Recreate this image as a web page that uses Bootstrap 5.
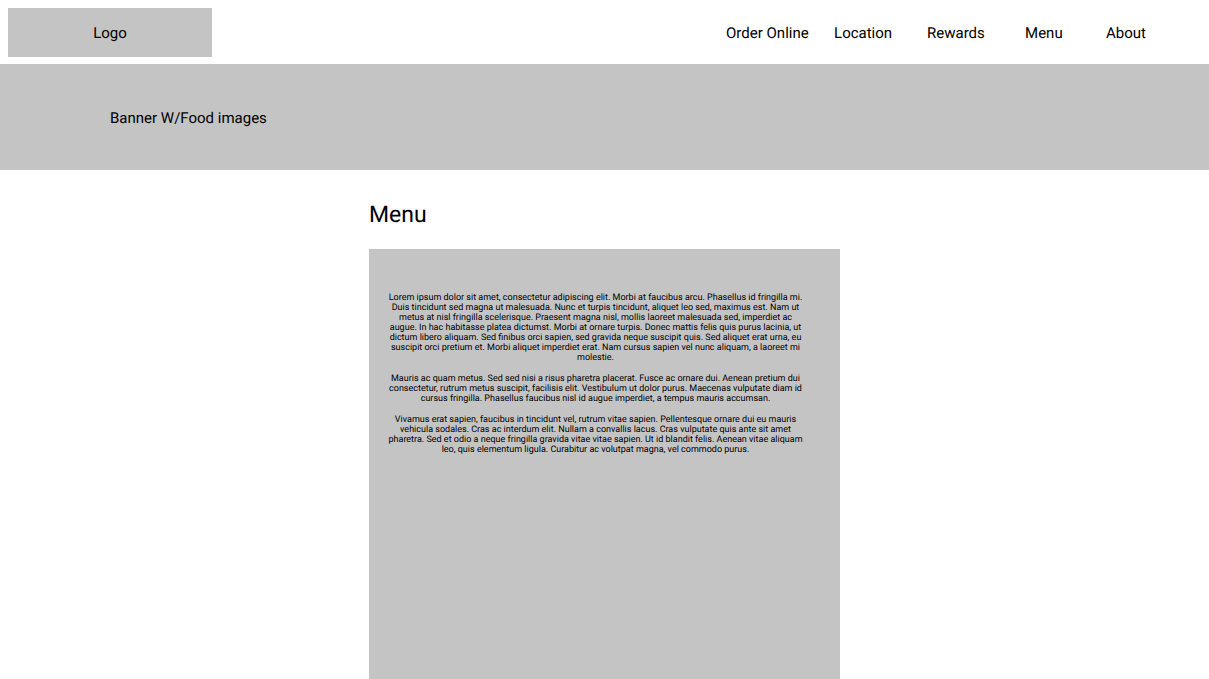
<!DOCTYPE html>
<html lang="en">
<head>
<meta charset="utf-8">
<meta name="viewport" content="width=device-width, initial-scale=1">
<title>Menu</title>
<link href="https://cdn.jsdelivr.net/npm/bootstrap@5.3.0/dist/css/bootstrap.min.css" rel="stylesheet">
<style>
  :root { --block: #c4c4c4; }
  body { font-family: Roboto, sans-serif; font-size: 15px; line-height: 18px; color: #000; text-rendering: geometricPrecision; }
  .block { background: var(--block); }
  .site-header { padding: 8px 8px 7px; }
  .site-logo { width: 204px; height: 49px; color: #000; }
  .site-nav { display: grid; grid-template-columns: 108px 93px 98px 81px auto; padding-right: 55px; }
  .site-nav .nav-link { color: #000; }
  .banner { min-height: 106px; padding: 2px 110px 0; }
  .menu-column { width: 100%; max-width: 471px; padding-top: 31px; }
  .menu-title { font-size: 23px; line-height: 27px; margin-bottom: 21px; }
  .menu-card { padding: 44px 36px 20px 18px; font-size: 9px; line-height: 10px; }
  .menu-card p { margin-bottom: 11px; }
</style>
</head>
<body class="d-flex flex-column min-vh-100 bg-white">
  <header class="site-header d-flex justify-content-between align-items-center">
    <a href="#" class="site-logo block d-flex align-items-center justify-content-center text-decoration-none">Logo</a>
    <nav class="site-nav" aria-label="Main">
      <a class="nav-link p-0" href="#">Order Online</a>
      <a class="nav-link p-0" href="#">Location</a>
      <a class="nav-link p-0" href="#">Rewards</a>
      <a class="nav-link p-0" href="#">Menu</a>
      <a class="nav-link p-0" href="#">About</a>
    </nav>
  </header>
  <section class="banner block d-flex align-items-center">Banner W/Food images</section>
  <main class="menu-column mx-auto d-flex flex-column flex-grow-1">
    <h1 class="menu-title fw-normal">Menu</h1>
    <article class="menu-card block text-center flex-grow-1">
      <p>Lorem ipsum dolor sit amet, consectetur adipiscing elit. Morbi at faucibus arcu. Phasellus id fringilla mi. Duis tincidunt sed magna ut malesuada. Nunc et turpis tincidunt, aliquet leo sed, maximus est. Nam ut metus at nisl fringilla scelerisque. Praesent magna nisl, mollis laoreet malesuada sed, imperdiet ac augue. In hac habitasse platea dictumst. Morbi at ornare turpis. Donec mattis felis quis purus lacinia, ut dictum libero aliquam. Sed finibus orci sapien, sed gravida neque suscipit quis. Sed aliquet erat urna, eu suscipit orci pretium et. Morbi aliquet imperdiet erat. Nam cursus sapien vel nunc aliquam, a laoreet mi molestie.</p>
      <p>Mauris ac quam metus. Sed sed nisi a risus pharetra placerat. Fusce ac ornare dui. Aenean pretium dui consectetur, rutrum metus suscipit, facilisis elit. Vestibulum ut dolor purus. Maecenas vulputate diam id cursus fringilla. Phasellus faucibus nisl id augue imperdiet, a tempus mauris accumsan.</p>
      <p>Vivamus erat sapien, faucibus in tincidunt vel, rutrum vitae sapien. Pellentesque ornare dui eu mauris vehicula sodales. Cras ac interdum elit. Nullam a convallis lacus. Cras vulputate quis ante sit amet pharetra. Sed et odio a neque fringilla gravida vitae vitae sapien. Ut id blandit felis. Aenean vitae aliquam leo, quis elementum ligula. Curabitur ac volutpat magna, vel commodo purus.</p>
    </article>
  </main>
<script src="https://cdn.jsdelivr.net/npm/bootstrap@5.3.0/dist/js/bootstrap.bundle.min.js"></script>
</body>
</html>
